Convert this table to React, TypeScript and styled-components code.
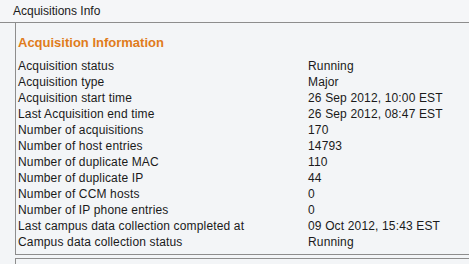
import styled, { createGlobalStyle } from "styled-components";

const GlobalStyle = createGlobalStyle`
    html, body {
        margin: 0;
        padding: 0;
        background: #f3f5f7;
    }
    body {
        font-family: "Liberation Sans", Arial, sans-serif;
        font-size: 12px;
        color: #1a1a1a;
        overflow: hidden;
    }
`;

type RowType = {
    label: string,
    value: string,
}

const rows: RowType[] = [
    { label: "Acquisition status", value: "Running" },
    { label: "Acquisition type", value: "Major" },
    { label: "Acquisition start time", value: "26 Sep 2012, 10:00 EST" },
    { label: "Last Acquisition end time", value: "26 Sep 2012, 08:47 EST" },
    { label: "Number of acquisitions", value: "170" },
    { label: "Number of host entries", value: "14793" },
    { label: "Number of duplicate MAC", value: "110" },
    { label: "Number of duplicate IP", value: "44" },
    { label: "Number of CCM hosts", value: "0" },
    { label: "Number of IP phone entries", value: "0" },
    { label: "Last campus data collection completed at", value: "09 Oct 2012, 15:43 EST" },
    { label: "Campus data collection status", value: "Running" },
];

export default function App() {
    return (
        <Page>
            <GlobalStyle />
            <TitleBar>Acquisitions Info</TitleBar>
            <Body>
                <Panel>
                    <Heading>Acquisition Information</Heading>
                    <InfoTable>
                        {rows.map((r) => (
                            <Row key={r.label}>
                                <Label>{r.label}</Label>
                                <Value>{r.value}</Value>
                            </Row>
                        ))}
                    </InfoTable>
                </Panel>
                <Panel $empty />
            </Body>
        </Page>
    );
}

const Page = styled.div`
    width: 469px;
    height: 264px;
    overflow: hidden;
    display: flex;
    flex-direction: column;
`;

const TitleBar = styled.div`
    height: 22px;
    line-height: 22px;
    padding-left: 13px;
    background: #f5f6f8;
    border-bottom: 1px solid #8d8d8d;
    font-size: 12px;
`;

const Body = styled.div`
    display: flex;
    flex-direction: column;
    gap: 3px;
    padding-left: 15px;
`;

const Panel = styled.div<{ $empty?: boolean }>`
    border-left: 1px solid #8d8d8d;
    border-bottom: ${(p) => (p.$empty ? "none" : "1px solid #8d8d8d")};
    border-top: ${(p) => (p.$empty ? "1px solid #8d8d8d" : "none")};
    margin-right: -20px;
    padding: 10px 0 4px 2px;
    min-height: ${(p) => (p.$empty ? "20px" : "auto")};
`;

const Heading = styled.div`
    color: #e07c1c;
    font-weight: bold;
    font-size: 13px;
    line-height: 20px;
    margin-bottom: 5px;
`;

const InfoTable = styled.div`
    display: flex;
    flex-direction: column;
    letter-spacing: 0.15px;
`;

const Row = styled.div`
    display: grid;
    grid-template-columns: 290px 1fr;
    line-height: 16px;
    height: 16px;
`;

const Label = styled.span`
    white-space: nowrap;
`;

const Value = styled.span`
    white-space: nowrap;
`;
